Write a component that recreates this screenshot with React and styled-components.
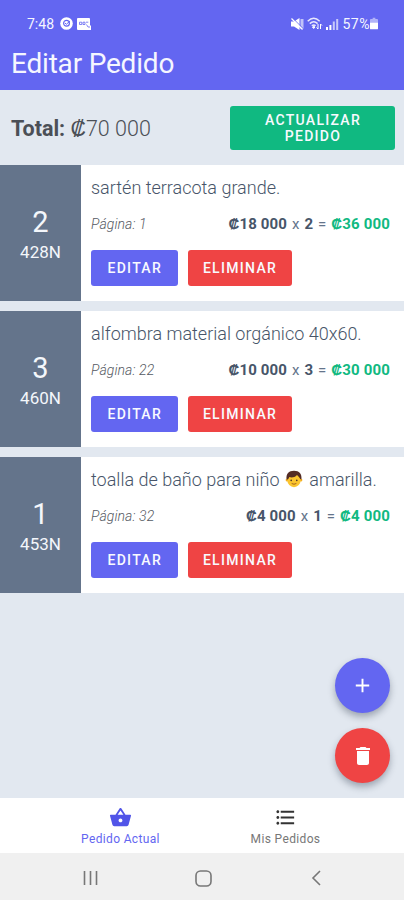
import React from 'react'
import styled, { createGlobalStyle } from 'styled-components'
import { MdAdd, MdDelete, MdShoppingBasket, MdFormatListBulleted } from 'react-icons/md'

const GlobalStyle = createGlobalStyle`
  * {
    box-sizing: border-box;
  }

  body {
    margin: 0;
    font-family: Roboto, 'Liberation Sans', sans-serif;
    background-color: #e2e8f0;
  }
`

const Screen = styled.div`
  position: relative;
  display: flex;
  flex-direction: column;
  width: 404px;
  height: 900px;
  overflow: hidden;
  background-color: #e2e8f0;
`

const Header = styled.header`
  height: 90px;
  flex-shrink: 0;
  background-color: #6366f1;
  color: #f5f6ff;
`

const StatusBar = styled.div`
  display: flex;
  align-items: center;
  height: 46px;
  padding: 1px 26px 0 27px;
  font-size: 14px;
`

const StatusIcons = styled.div`
  display: flex;
  align-items: center;
  gap: ${props => props.gap}px;
  margin-left: ${props => props.push ? 'auto' : '6px'};

  svg {
    display: block;
  }
`

const Battery = styled.span`
  display: flex;
  align-items: center;
  margin-left: 1px;
  letter-spacing: 0.5px;
`

const Title = styled.h1`
  margin: 0;
  padding-left: 11px;
  font-size: 28px;
  font-weight: 400;
  line-height: 36px;
  letter-spacing: -0.2px;
`

const Summary = styled.div`
  display: flex;
  justify-content: space-between;
  align-items: center;
  height: 75px;
  flex-shrink: 0;
  padding: 0 9px 0 11px;
`

const Total = styled.div`
  padding-top: 2px;
  font-size: 21.5px;
  font-weight: 300;
  color: #4b4f56;

  b {
    font-weight: 700;
  }
`

const Button = styled.button`
  width: ${props => props.width}px;
  height: ${props => props.height || 36}px;
  padding: 0 0 0 1px;
  border: none;
  border-radius: 3px;
  background-color: ${props => props.color};
  color: #f8faff;
  font-family: inherit;
  font-size: 14px;
  font-weight: 500;
  line-height: 16px;
  letter-spacing: 1.3px;
  text-transform: uppercase;
`

const List = styled.div`
  display: flex;
  flex-direction: column;
  gap: 10px;
`

const Card = styled.div`
  display: flex;
  height: 136px;
  background-color: white;
`

const Side = styled.div`
  display: flex;
  flex-direction: column;
  justify-content: center;
  align-items: center;
  width: 81px;
  padding-top: 4px;
  background-color: #64748b;
  color: #f4f7fb;
`

const Quantity = styled.div`
  font-size: 29px;
  line-height: 34px;
`

const Code = styled.div`
  font-size: 17px;
  line-height: 26px;
`

const Details = styled.div`
  display: flex;
  flex-direction: column;
  flex: 1;
  padding: 9px 14px 0 10px;
`

const Name = styled.div`
  display: flex;
  align-items: center;
  height: 26px;
  font-size: 18px;
  font-weight: 300;
  color: #475569;
  white-space: pre;

  svg {
    margin: 0 1.5px;
  }
`

const Info = styled.div`
  display: flex;
  justify-content: space-between;
  align-items: center;
  height: 20px;
  margin-top: 14px;
`

const Page = styled.div`
  font-size: 14px;
  font-style: italic;
  font-weight: 300;
  color: #555a62;
  letter-spacing: 0.1px;
`

const Price = styled.div`
  font-size: 15px;
  color: #64748b;
  letter-spacing: 0.15px;
  word-spacing: 1px;

  b {
    font-weight: 700;
    color: #475569;
    word-spacing: 0;
  }
`

const Subtotal = styled.b`
  && {
    color: #10b981;
  }
`

const Actions = styled.div`
  display: flex;
  gap: 10px;
  margin-top: 16px;
`

const FloatingButtons = styled.div`
  position: absolute;
  right: 14px;
  bottom: 117px;
  display: flex;
  flex-direction: column;
  gap: 15px;
`

const RoundButton = styled.button`
  display: flex;
  justify-content: center;
  align-items: center;
  width: 55px;
  height: 55px;
  padding: 0;
  border: none;
  border-radius: 50%;
  background-color: ${props => props.color};
  color: white;
  box-shadow: 0 4px 7px rgba(30, 41, 59, 0.35);
`

const Tabs = styled.nav`
  display: flex;
  height: 55px;
  flex-shrink: 0;
  margin-top: auto;
  padding: 0 36px 0 38px;
  background-color: white;
`

const Tab = styled.div`
  display: flex;
  flex-direction: column;
  align-items: center;
  flex: 1;
  padding-top: 8px;
  font-size: 12px;
  line-height: 16px;
  letter-spacing: 0.35px;
  color: ${props => props.active ? '#6366f1' : '#777'};

  svg {
    margin-bottom: 2px;
    color: ${props => props.active ? '#5154e8' : '#333'};
  }
`

const SystemBar = styled.div`
  display: flex;
  align-items: center;
  height: 47px;
  flex-shrink: 0;
  padding: 3px 79px 0 82px;
  justify-content: space-between;
  background-color: #f0f0f0;
`

const items = [
  { quantity: 2, code: '428N', name: ['sartén terracota grande.'], page: 1, price: '18 000', subtotal: '36 000' },
  { quantity: 3, code: '460N', name: ['alfombra material orgánico 40x60.'], page: 22, price: '10 000', subtotal: '30 000' },
  { quantity: 1, code: '453N', name: ['toalla de baño para niño ', ' amarilla.'], page: 32, price: '4 000', subtotal: '4 000' },
]

const BoyFace = () => (
  <svg width="18" height="18" viewBox="0 0 18 18">
    <circle cx="2.2" cy="10" r="1.6" fill="#f3ae22" />
    <circle cx="15.8" cy="10" r="1.6" fill="#f3ae22" />
    <ellipse cx="9" cy="10" rx="6.7" ry="7.2" fill="#fbc52f" />
    <path d="M1.6 9.5C.8 3.7 3.8.8 9 .8s8.2 2.9 7.4 8.7l-1.200-.6C14.5 7.800 14 6.800 12 5 9.500 7.600 6.500 8 4.300 7c-.2 1-.7 1.700-1.500 2.500z" fill="#542c25" />
    <circle cx="6.2" cy="10.4" r=".8" fill="#493028" />
    <circle cx="11.8" cy="10.4" r=".8" fill="#493028" />
    <path d="M7 13.700q2 1.300 4 0" fill="none" stroke="#9b5a19" strokeWidth=".9" strokeLinecap="round" />
  </svg>
)

const ChatIcon = () => (
  <svg width="13" height="13" viewBox="0 0 13 13">
    <circle cx="6.5" cy="6.5" r="6.3" fill="#fff" />
    <circle cx="6.5" cy="6.3" r="2.9" fill="none" stroke="#6366f1" strokeWidth="1.2" />
    <path d="M5 6l1.300 1.300L10 4" fill="none" stroke="#6366f1" />
  </svg>
)

const CardIcon = () => (
  <svg width="14" height="12" viewBox="0 0 14 12">
    <path d="M1 0h11q1 0 1 1v6l1 1v4H1q-1 0-1-1V1q0-1 1-1z" fill="#fff" />
    <path d="M2.500 4.200h2.300v2.300H2.500zM6 4.200h2v2.300H6zM9 4.200h2.300M9.500 6.500l1.500 2.500h2" fill="none" stroke="#6366f1" strokeWidth=".8" />
  </svg>
)

const MuteIcon = () => (
  <svg width="13" height="12" viewBox="0 0 13 12" fill="#fff">
    <path d="M0 3.500h3L8.500 0v12L3 8.500H0z" />
    <path d="M9.500 1h3v10h-3z" opacity=".6" />
    <path d="M1.500 0l11 11" stroke="#6366f1" />
    <path d="M.5.5l11 11" stroke="#fff" strokeWidth="1.2" />
  </svg>
)

const WifiIcon = () => (
  <svg width="16" height="13" viewBox="0 0 16 13" fill="none" stroke="#fff">
    <path d="M.7 4.200q6-5.800 12 0M2.800 6.600q4-3.700 7.800 0M4.800 8.800q2-1.700 3.800 0" strokeWidth="1.5" opacity=".85" />
    <path d="M5.500 10l1.200-1 1.200 1-1.200 1.500z" fill="#fff" />
    <path d="M11 7v5l-1.500-1.500M13.500 12V7L15 8.500" />
  </svg>
)

const SignalIcon = () => (
  <svg width="13" height="12" viewBox="0 0 13 12" fill="#fff">
    <path d="M0 9h2v3H0zM3.400 7h2v5h-2z" />
    <path d="M6.800 3.500h2V12h-2zM10.200 1h2v11h-2z" opacity=".65" />
  </svg>
)

const BatteryIcon = () => (
  <svg width="8" height="13" viewBox="0 0 9 13" fill="#fff">
    <path d="M3 0h3v1.500h2q1 0 1 1V5.500H0v-3q0-1 1-1h2z" opacity=".5" />
    <path d="M0 5.500h9V12q0 1-1 1H1q-1 0-1-1z" />
  </svg>
)

const App = () => (
  <>
    <GlobalStyle />
    <Screen>
      <Header>
        <StatusBar>
          7:48
          <StatusIcons gap={4}>
            <ChatIcon />
            <CardIcon />
          </StatusIcons>
          <StatusIcons push gap={3}>
            <MuteIcon />
            <WifiIcon />
            <SignalIcon />
            <Battery>57%<BatteryIcon /></Battery>
          </StatusIcons>
        </StatusBar>
        <Title>Editar Pedido</Title>
      </Header>

      <Summary>
        <Total><b>Total:</b> ₡70 000</Total>
        <Button color='#10b981' width={165} height={44}>Actualizar<br />pedido</Button>
      </Summary>

      <List>
        {items.map(item => (
          <Card key={item.code}>
            <Side>
              <Quantity>{item.quantity}</Quantity>
              <Code>{item.code}</Code>
            </Side>
            <Details>
              <Name>
                {item.name[0]}
                {item.name[1] && <BoyFace />}
                {item.name[1]}
              </Name>
              <Info>
                <Page>Página: {item.page}</Page>
                <Price>
                  <b>₡{item.price}</b> x <b>{item.quantity}</b> = <Subtotal>₡{item.subtotal}</Subtotal>
                </Price>
              </Info>
              <Actions>
                <Button color='#6366f1' width={86.5}>Editar</Button>
                <Button color='#ef4444' width={104}>Eliminar</Button>
              </Actions>
            </Details>
          </Card>
        ))}
      </List>

      <FloatingButtons>
        <RoundButton color='#6366f1'><MdAdd size={23} /></RoundButton>
        <RoundButton color='#ef4444'><MdDelete size={24} /></RoundButton>
      </FloatingButtons>

      <Tabs>
        <Tab active>
          <MdShoppingBasket size={23} />
          Pedido Actual
        </Tab>
        <Tab>
          <MdFormatListBulleted size={23} />
          Mis Pedidos
        </Tab>
      </Tabs>

      <SystemBar>
        <svg width="17" height="16" viewBox="0 0 17 16" fill="none" stroke="#777" strokeWidth="1.6">
          <path d="M2.500 1v14M8.500 1v14M14.500 1v14" />
        </svg>
        <svg width="17" height="17" viewBox="0 0 17 17" fill="none" stroke="#777" strokeWidth="1.6">
          <rect x="1" y="1" width="15" height="15" rx="4.5" />
        </svg>
        <svg width="17" height="16" viewBox="0 0 17 16" fill="none" stroke="#777" strokeWidth="1.6">
          <path d="M12 1L5 8l7 7" />
        </svg>
      </SystemBar>
    </Screen>
  </>
)

export default App
